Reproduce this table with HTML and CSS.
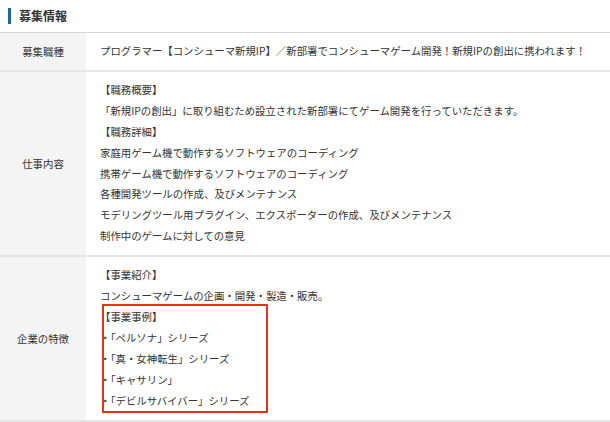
FILE: index.html
```html
<!DOCTYPE html>
<html lang="ja">
<head>
    <meta charset="UTF-8">
    <meta name="viewport" content="width=device-width, initial-scale=1.0">
    <title>募集情報</title>
    <link rel="stylesheet" href="styles.css">
</head>
<body>
    <section class="recruit">
        <div class="section-head">
            <h2>募集情報</h2>
        </div>
        <div class="info-table">
            <div class="info-row">
                <div class="info-label">募集職種</div>
                <div class="info-body">
                    <p>プログラマー【コンシューマ新規IP】／新部署でコンシューマゲーム開発！新規IPの創出に携われます！</p>
                </div>
            </div>
            <div class="info-row">
                <div class="info-label">仕事内容</div>
                <div class="info-body">
                    <p>【職務概要】</p>
                    <p>「新規IPの創出」に取り組むため設立された新部署にてゲーム開発を行っていただきます。</p>
                    <p>【職務詳細】</p>
                    <p>家庭用ゲーム機で動作するソフトウェアのコーディング</p>
                    <p>携帯ゲーム機で動作するソフトウェアのコーディング</p>
                    <p>各種開発ツールの作成、及びメンテナンス</p>
                    <p>モデリングツール用プラグイン、エクスポーターの作成、及びメンテナンス</p>
                    <p>制作中のゲームに対しての意見</p>
                </div>
            </div>
            <div class="info-row">
                <div class="info-label">企業の特徴</div>
                <div class="info-body">
                    <p>【事業紹介】</p>
                    <p>コンシューマゲームの企画・開発・製造・販売。</p>
                    <div class="highlight">
                        <p>【事業事例】</p>
                        <p>・「ペルソナ」シリーズ</p>
                        <p>・「真・女神転生」シリーズ</p>
                        <p>・「キャサリン」</p>
                        <p>・「デビルサバイバー」シリーズ</p>
                    </div>
                </div>
            </div>
        </div>
    </section>
</body>
</html>
```

FILE: styles.css
```css
* {
    margin: 0;
    padding: 0;
    box-sizing: border-box;
}

body {
    font-family: "Noto Sans CJK JP", "Noto Sans", sans-serif;
    font-size: 10.4px;
    color: #333;
    background: #fff;
}

.section-head {
    height: 33px;
    padding-left: 8px;
    display: flex;
    align-items: center;
    border-bottom: 1px solid #d6d6d6;
}

.section-head h2 {
    font-size: 12px;
    font-weight: bold;
    line-height: 16px;
    border-left: 3px solid #1d6a98;
    padding-left: 8px;
    color: #333;
}

.info-row {
    display: grid;
    grid-template-columns: 86px 1fr;
    border-bottom: 2px solid #e6e6e6;
}

.info-label {
    background-color: #f4f4f4;
    display: flex;
    align-items: center;
    justify-content: center;
}

.info-body {
    padding: 8px 14px;
    line-height: 20.9px;
}

.info-body p {
    white-space: nowrap;
}

.highlight {
    position: relative;
}

/* red annotation frame */
.highlight::after {
    content: "";
    position: absolute;
    top: -3px;
    left: 2px;
    width: 162px;
    bottom: -1px;
    border: 2px solid #e8321e;
}
```
